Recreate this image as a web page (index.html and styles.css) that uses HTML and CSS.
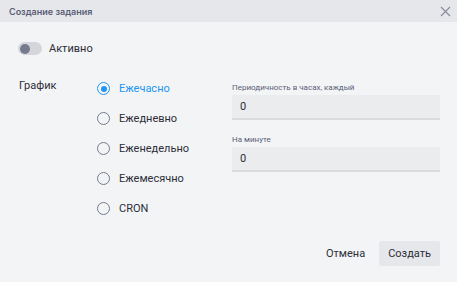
FILE: index.html
```html
<!DOCTYPE html>
<html lang="ru">
<head>
  <meta charset="UTF-8">
  <title>Создание задания</title>
  <link rel="stylesheet" href="styles.css">
</head>
<body>
  <div class="dialog">
    <!-- шапка -->
    <div class="dialog-header">
      <span class="dialog-title">Создание задания</span>
      <svg class="close" width="11" height="11" viewBox="0 0 11 11">
        <path d="M1 1L10 10M10 1L1 10" stroke="#8a8d9c" stroke-width="1.2" fill="none"/>
      </svg>
    </div>

    <div class="dialog-body">
      <div class="toggle-row">
        <span class="toggle"><span class="knob"></span></span>
        <span class="toggle-label">Активно</span>
      </div>

      <div class="schedule">
        <div class="schedule-title">График</div>
        <div class="radios">
          <label class="radio checked"><span class="circle"></span>Ежечасно</label>
          <label class="radio"><span class="circle"></span>Ежедневно</label>
          <label class="radio"><span class="circle"></span>Еженедельно</label>
          <label class="radio"><span class="circle"></span>Ежемесячно</label>
          <label class="radio"><span class="circle"></span>CRON</label>
        </div>
        <div class="fields">
          <div class="field">
            <div class="field-label">Периодичность в часах, каждый</div>
            <div class="field-input">0</div>
          </div>
          <div class="field">
            <div class="field-label">На минуте</div>
            <div class="field-input">0</div>
          </div>
        </div>
      </div>
    </div>

    <div class="dialog-footer">
      <button class="btn">Отмена</button>
      <button class="btn primary">Создать</button>
    </div>
  </div>
</body>
</html>
```

FILE: styles.css
```css
* {
  margin: 0;
  padding: 0;
  box-sizing: border-box;
}
body {
  font-family: Roboto, "Liberation Sans", sans-serif;
  background: #f3f4f6;
  color: #2c2e38;
}
.dialog {
  width: 457px;
  height: 282px;
  display: flex;
  flex-direction: column;
  background: #f3f4f6;
}
/* шапка */
.dialog-header {
  height: 22px;
  background: #e6e7eb;
  display: flex;
  align-items: center;
  justify-content: space-between;
  padding: 0 6px 0 9px;
}
.dialog-title {
  font-family: Inter, Roboto, sans-serif;
  font-weight: 600;
  font-size: 9px;
  color: #5a5d76;
}
/* тело */
.dialog-body {
  padding: 20px 17px 0 18px;
}
.toggle-row {
  display: flex;
  align-items: center;
  height: 13px;
}
.toggle {
  width: 24px;
  height: 13px;
  border-radius: 7px;
  background: #d4d6dc;
  position: relative;
}
.knob {
  position: absolute;
  left: 2px;
  top: 1.5px;
  width: 10px;
  height: 10px;
  border-radius: 50%;
  background: #767a8e;
}
.toggle-label {
  margin-left: 7px;
  font-size: 11px;
}
.schedule {
  display: flex;
  align-items: flex-start;
  margin-top: 18.5px;
}
.schedule-title {
  width: 79px;
  padding-left: 1px;
  font-size: 11px;
  line-height: 24px;
}
.radios {
  width: 135px;
  display: flex;
  flex-direction: column;
}
.radio {
  display: flex;
  align-items: center;
  height: 30px;
  font-size: 11px;
}
.circle {
  width: 13px;
  height: 13px;
  border-radius: 50%;
  border: 1.5px solid #767a8e;
  margin-right: 9px;
  display: flex;
  align-items: center;
  justify-content: center;
}
.radio.checked {
  color: #2196f3;
}
.radio.checked .circle {
  border-color: #2196f3;
}
.radio.checked .circle::after {
  content: "";
  width: 6px;
  height: 6px;
  border-radius: 50%;
  background: #2196f3;
}
.fields {
  flex: 1;
  margin-top: 8.5px;
  display: flex;
  flex-direction: column;
  gap: 14px;
}
.field-label {
  font-size: 8px;
  line-height: 12px;
  color: #5a5d76;
  margin-bottom: 1px;
}
.field-input {
  height: 25px;
  background: #ebecee;
  border-bottom: 2px solid #d9dbdf;
  padding-left: 8px;
  font-size: 11px;
  line-height: 23px;
}
/* кнопки */
.dialog-footer {
  margin-top: auto;
  display: flex;
  justify-content: flex-end;
  gap: 5px;
  padding: 0 17px 16px 0;
}
.btn {
  font-family: Roboto, "Liberation Sans", sans-serif;
  font-size: 11px;
  color: #2c2e38;
  background: none;
  border: none;
  height: 25px;
  padding: 0 9px;
  border-radius: 2px;
}
.btn.primary {
  background: #e6e7eb;
}
```
